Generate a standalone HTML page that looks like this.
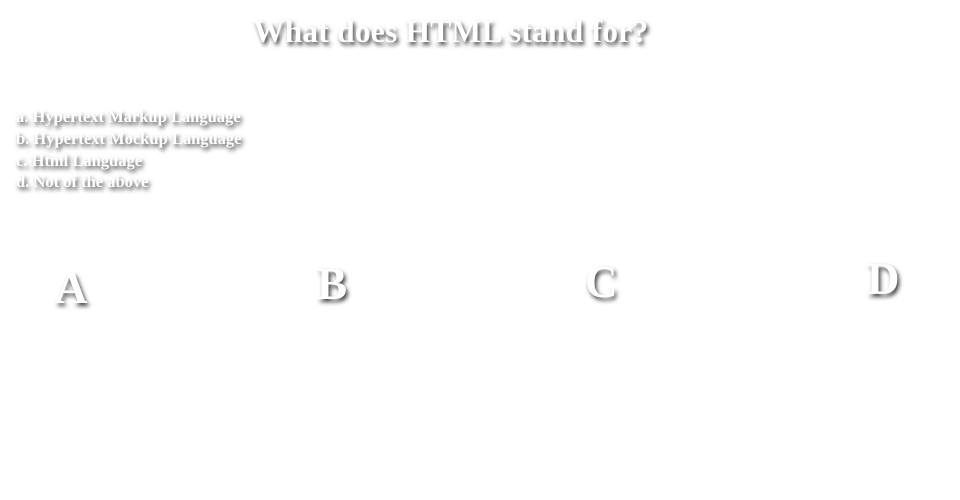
<!DOCTYPE html>
<html><head><style>
body{margin:0;width:960px;height:500px;background:#fff;position:relative;overflow:hidden;font-family:"Liberation Serif",serif;color:#fff;}
.t{position:absolute;white-space:nowrap;text-shadow:2px 3px 4px rgba(0,0,0,.75);}
h1{position:absolute;left:253px;top:14px;margin:0;font-size:31.5px;font-weight:bold;white-space:nowrap;text-shadow:2px 3px 4px rgba(0,0,0,.75);letter-spacing:0.2px}
.o{left:16px;font-size:16.5px;font-weight:bold;}
.L{font-size:45px;font-weight:bold;line-height:1}
</style></head><body>
<h1>What does HTML stand for?</h1>
<div class="t o" style="top:107px">a. Hypertext Markup Language</div>
<div class="t o" style="top:129px">b. Hypertext Mockup Language</div>
<div class="t o" style="top:151px">c. Html Language</div>
<div class="t o" style="top:172px">d. Not of the above</div>
<div class="t L" style="left:55px;top:266px">A</div>
<div class="t L" style="left:317px;top:262px">B</div>
<div class="t L" style="left:585px;top:260px">C</div>
<div class="t L" style="left:867px;top:257px">D</div>
</body></html>
